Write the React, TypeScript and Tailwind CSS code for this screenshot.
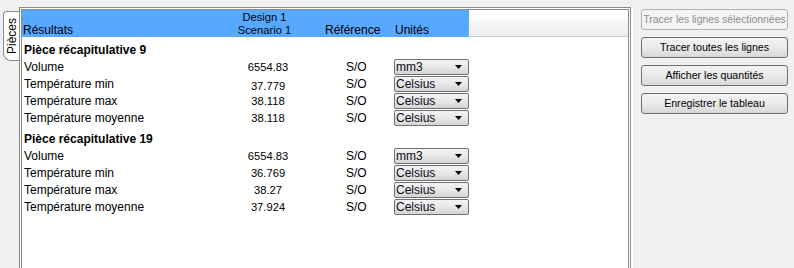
const sections = [
  {
    title: "Pièce récapitulative 9",
    rows: [
      { label: "Volume", value: "6554.83", unit: "mm3" },
      { label: "Température min", value: "37.779", unit: "Celsius", low: true },
      { label: "Température max", value: "38.118", unit: "Celsius" },
      { label: "Température moyenne", value: "38.118", unit: "Celsius" },
    ],
  },
  {
    title: "Pièce récapitulative 19",
    rows: [
      { label: "Volume", value: "6554.83", unit: "mm3" },
      { label: "Température min", value: "36.769", unit: "Celsius" },
      { label: "Température max", value: "38.27", unit: "Celsius" },
      { label: "Température moyenne", value: "37.924", unit: "Celsius" },
    ],
  },
];

const buttons = [
  { label: "Tracer les lignes sélectionnées", disabled: true },
  { label: "Tracer toutes les lignes" },
  { label: "Afficher les quantités" },
  { label: "Enregistrer le tableau" },
];

function Combo({ value }: { value: string }) {
  return (
    <div className="flex h-[16px] w-[75px] items-center justify-between rounded-[2px] border border-[#707070] bg-gradient-to-b from-[#f3f3f3] via-[#e8e8e8] to-[#d4d4d4] pl-px pr-[6px] text-[12px] leading-none text-[#0a0a20]">
      <span>{value}</span>
      <svg width="7" height="4" viewBox="0 0 7 4">
        <path d="M0 0h7L3.5 4z" fill="#000" />
      </svg>
    </div>
  );
}

function WinButton({ label, disabled }: { label: string; disabled?: boolean }) {
  return (
    <div
      className={
        disabled
          ? "flex h-[21px] items-center justify-center whitespace-nowrap rounded-[3px] border border-[#adb2b5] bg-[#f4f4f4] text-[10.4px] text-[#8d8d8d]"
          : "flex h-[21px] items-center justify-center whitespace-nowrap rounded-[3px] border border-[#707070] bg-gradient-to-b from-[#f2f2f2] via-[#ebebeb] to-[#d8d8d8] text-[10.6px] text-black"
      }
    >
      {label}
    </div>
  );
}

export default function App() {
  return (
    <div className="flex h-[268px] w-[794px] overflow-hidden bg-[#f0f0f0] font-['Liberation_Sans',Arial,sans-serif] text-[12px] text-black">
      {/* onglet vertical */}
      <div className="w-[19px] shrink-0 pl-[3px] pt-[11px]">
        <div className="flex h-[50px] w-[16px] items-center justify-center rounded-tl-[4px] rounded-bl-[8px] border border-r-0 border-[#898c95] bg-white">
          <span className="rotate-180 text-[12px] leading-none [writing-mode:vertical-rl]">Pièces</span>
        </div>
      </div>

      {/* panneau des résultats */}
      <div className="mt-[7px] h-[290px] w-[612px] shrink-0 border border-[#8a8a8a] bg-white p-px">
        <div className="h-full border border-[#8a8a8a] bg-white">
          <div className="flex h-[27px]">
            <div className="grid w-[447px] grid-cols-[210px_74px_88px_75px] bg-[#56a9ff]">
              <div className="self-end pl-px leading-[14px]">Résultats</div>
              <div className="self-end pr-[9px] text-center text-[11.2px] leading-[13px]">
                Design 1
                <br />
                Scenario 1
              </div>
              <div className="self-end pl-[19px] leading-[14px]">Référence</div>
              <div className="self-end pl-px leading-[14px]">Unités</div>
            </div>
            <div className="w-px bg-white" />
            <div className="flex-1 pt-[9px]">
              <div className="h-[18px] border-b border-[#c9c9c9] bg-gradient-to-b from-[#f9f9fa] to-[#ececee]" />
            </div>
          </div>

          {sections.map((s) => (
            <div key={s.title} className="pt-[5px]">
              <div className="flex h-[16px] items-center pl-[2px] font-bold">{s.title}</div>
              {s.rows.map((r) => (
                <div key={r.label} className="grid h-[17px] grid-cols-[210px_74px_88px_75px] items-center">
                  <div className="pl-[2px]">{r.label}</div>
                  <div className={r.low ? "translate-y-[2px] pr-[2px] text-center text-[11.2px]" : "pr-[2px] text-center text-[11.2px]"}>
                    {r.value}
                  </div>
                  <div className="pl-[40px]">S/O</div>
                  <Combo value={r.unit} />
                </div>
              ))}
            </div>
          ))}
        </div>
      </div>
      <div className="mt-[7px] w-[2px] shrink-0 bg-white" />

      {/* boutons */}
      <div className="flex w-[155px] shrink-0 flex-col gap-[7px] pl-[8px] pt-[9px]">
        {buttons.map((b) => (
          <WinButton key={b.label} label={b.label} disabled={b.disabled} />
        ))}
      </div>
    </div>
  );
}
